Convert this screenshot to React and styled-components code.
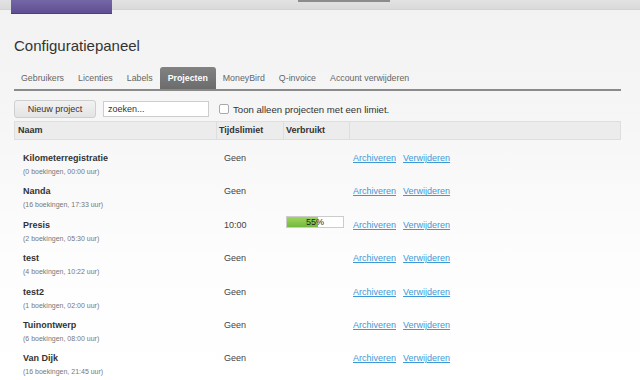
import React from 'react';
import styled, { createGlobalStyle } from 'styled-components';

const GlobalStyle = createGlobalStyle`
  html, body {
    margin: 0;
    padding: 0;
  }
  body {
    font-family: "Liberation Sans", Arial, sans-serif;
    background: linear-gradient(#f2f2f2 0px, #f6f6f6 120px, #fdfdfd 260px, #ffffff 380px);
    min-height: 380px;
    color: #333;
  }
`;

const TopBar = styled.div`
  height: 10px;
  background: linear-gradient(#e2e2e2, #dadada);
  border-bottom: 1px solid #d2d2d2;
  box-sizing: border-box;
  display: flex;
  align-items: flex-start;
  padding-left: 11px;
`;

const Logo = styled.div`
  width: 101px;
  height: 14px;
  flex-shrink: 0;
  background: linear-gradient(#7566a8, #5f4f92);
  border-bottom: 1px solid #4c3f7a;
  box-sizing: border-box;
  position: relative;
  z-index: 1;
`;

const TopField = styled.div`
  width: 92px;
  height: 2px;
  margin-left: 186px;
  background: #8c8c8c;
`;

const Page = styled.div`
  padding-left: 14px;
  width: 607px;
`;

const Title = styled.h1`
  margin: 27px 0 0;
  font-size: 15px;
  line-height: 18px;
  font-weight: normal;
  color: #333;
`;

const Tabs = styled.div`
  display: flex;
  margin-top: 12px;
  border-bottom: 2px solid #8a8a8a;
`;

const Tab = styled.div`
  height: 22px;
  line-height: 22px;
  padding: 0 ${(p) => (p.$active ? '8px' : '7px')};
  font-size: 8.8px;
  color: ${(p) => (p.$active ? '#fff' : '#666')};
  font-weight: ${(p) => (p.$active ? 'bold' : 'normal')};
  background: ${(p) => (p.$active ? 'linear-gradient(#828282, #6c6c6c)' : 'transparent')};
  border-radius: 3px 3px 0 0;
`;

const Toolbar = styled.div`
  display: flex;
  align-items: center;
  margin-top: 9px;
  height: 18px;
`;

const Button = styled.button`
  width: 82px;
  height: 18px;
  padding: 0;
  font-family: inherit;
  font-size: 9px;
  color: #333;
  background: linear-gradient(#f2f2f2, #e4e4e4);
  border: 1px solid #cfcfcf;
  border-radius: 3px;
`;

const Search = styled.input`
  margin-left: 7px;
  width: 106px;
  height: 16px;
  box-sizing: border-box;
  border: 1px solid #cdcdcd;
  background: #fff;
  font-family: inherit;
  font-size: 9px;
  color: #333;
  padding: 0 4px;
  outline: none;
`;

const Check = styled.span`
  margin-left: 10px;
  width: 8px;
  height: 8px;
  border: 1px solid #aaa;
  border-radius: 2px;
  background: #fff;
`;

const CheckLabel = styled.span`
  margin-left: 4px;
  font-size: 9.6px;
  color: #333;
`;

const Table = styled.div`
  margin-top: 3px;
`;

const Row = styled.div`
  display: grid;
  grid-template-columns: 201px 67px 66px 1fr;
  height: ${(p) => (p.$head ? '19px' : '33.4px')};
  box-sizing: border-box;
  background: ${(p) => (p.$head ? '#ececec' : 'transparent')};
  border: ${(p) => (p.$head ? '1px solid #dedede' : 'none')};
`;

const HeadCell = styled.div`
  font-size: 9px;
  font-weight: bold;
  color: #333;
  line-height: 17px;
  padding-left: ${(p) => (p.$first ? 3 : 2)}px;
  border-left: ${(p) => (p.$first ? 'none' : '1px solid #dedede')};
`;

const Cell = styled.div`
  padding: 12px 0 0 ${(p) => p.$pad || 9}px;
  font-size: 9px;
  line-height: 12px;
  color: #444;
`;

const Name = styled.div`
  font-weight: bold;
  color: #333;
`;

const Meta = styled.div`
  margin-top: 3px;
  font-size: 7px;
  line-height: 9px;
  color: #777;
`;

const Bar = styled.div`
  position: relative;
  width: 58px;
  height: 12px;
  margin-top: -3px;
  box-sizing: border-box;
  border: 1px solid #ccc;
  background: #fff;
  font-size: 9px;
  line-height: 10px;
  text-align: center;
  color: #222;
`;

const Fill = styled.div`
  position: absolute;
  left: 0;
  top: 0;
  bottom: 0;
  background: linear-gradient(#9fd65e, #74b83e);
`;

const BarText = styled.span`
  position: relative;
`;

const Links = styled.div`
  display: flex;
  gap: 7px;
`;

const Link = styled.a`
  color: #3e98d8;
  text-decoration: underline;
  font-size: 9px;
`;

const tabs = ['Gebruikers', 'Licenties', 'Labels', 'Projecten', 'MoneyBird', 'Q-invoice', 'Account verwijderen'];

const projects = [
  { name: 'Kilometerregistratie', meta: '(0 boekingen, 00:00 uur)', limit: 'Geen' },
  { name: 'Nanda', meta: '(16 boekingen, 17:33 uur)', limit: 'Geen' },
  { name: 'Presis', meta: '(2 boekingen, 05:30 uur)', limit: '10:00', used: 55 },
  { name: 'test', meta: '(4 boekingen, 10:22 uur)', limit: 'Geen' },
  { name: 'test2', meta: '(1 boekingen, 02:00 uur)', limit: 'Geen' },
  { name: 'Tuinontwerp', meta: '(6 boekingen, 08:00 uur)', limit: 'Geen' },
  { name: 'Van Dijk', meta: '(16 boekingen, 21:45 uur)', limit: 'Geen' },
];

export default function App() {
  return (
    <>
      <GlobalStyle />
      <TopBar>
        <Logo />
        <TopField />
      </TopBar>
      <Page>
        <Title>Configuratiepaneel</Title>
        <Tabs>
          {tabs.map((t) => (
            <Tab key={t} $active={t === 'Projecten'}>{t}</Tab>
          ))}
        </Tabs>
        <Toolbar>
          <Button>Nieuw project</Button>
          <Search defaultValue="zoeken..." />
          <Check />
          <CheckLabel>Toon alleen projecten met een limiet.</CheckLabel>
        </Toolbar>
        <Table>
          <Row $head>
            <HeadCell $first>Naam</HeadCell>
            <HeadCell>Tijdslimiet</HeadCell>
            <HeadCell>Verbruikt</HeadCell>
            <HeadCell />
          </Row>
          {projects.map((p) => (
            <Row key={p.name}>
              <Cell>
                <Name>{p.name}</Name>
                <Meta>{p.meta}</Meta>
              </Cell>
              <Cell>{p.limit}</Cell>
              <Cell $pad={4}>
                {p.used != null && (
                  <Bar>
                    <Fill style={{ width: `${p.used}%` }} />
                    <BarText>{p.used}%</BarText>
                  </Bar>
                )}
              </Cell>
              <Cell $pad={5}>
                <Links>
                  <Link href="#">Archiveren</Link>
                  <Link href="#">Verwijderen</Link>
                </Links>
              </Cell>
            </Row>
          ))}
        </Table>
      </Page>
    </>
  );
}
